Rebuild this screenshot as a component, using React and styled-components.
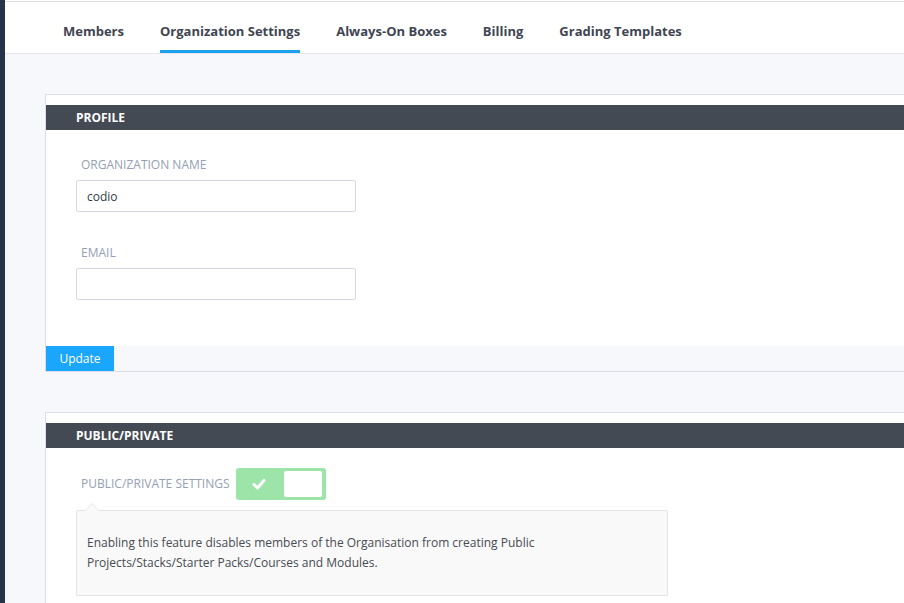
import React from 'react'
import styled, { createGlobalStyle } from 'styled-components'

const GlobalStyle = createGlobalStyle`
  html, body {
    margin: 0;
    padding: 0;
    overflow: hidden;
  }
  body {
    font-family: "Open Sans", "Liberation Sans", sans-serif;
    background: #f7f8fb;
  }
  * { box-sizing: border-box; }
`

const tabs = ['Members', 'Organization Settings', 'Always-On Boxes', 'Billing', 'Grading Templates']

function App() {
  return (
    <>
      <GlobalStyle />
      <Page>
        <Sidebar />
        <Main>
          <TabBar>
            {tabs.map((t) => (
              <Tab key={t} active={t === 'Organization Settings'}>{t}</Tab>
            ))}
          </TabBar>
          <Content>
            <Card>
              <CardHeader>Profile</CardHeader>
              <CardBody>
                <Label>Organization Name</Label>
                <Input defaultValue="codio" />
                <Label spaced>Email</Label>
                <Input defaultValue="" />
              </CardBody>
              <CardFooter>
                <Button>Update</Button>
              </CardFooter>
            </Card>

            <Card>
              <CardHeader>Public/Private</CardHeader>
              <ToggleRow>
                <Label inline>Public/Private Settings</Label>
                <Toggle>
                  <CheckHalf>
                    <svg width="14" height="12" viewBox="0 0 14 12">
                      <polyline points="2,6.5 5.5,10 12,2.5" fill="none" stroke="#fff" strokeWidth="3" strokeLinecap="round" strokeLinejoin="round" />
                    </svg>
                  </CheckHalf>
                  <Knob />
                </Toggle>
              </ToggleRow>
              <Hint>
                <HintText>
                  Enabling this feature disables members of the Organisation from creating Public Projects/Stacks/Starter Packs/Courses and Modules.
                </HintText>
              </Hint>
            </Card>
          </Content>
        </Main>
      </Page>
    </>
  )
}

export default App

const Page = styled.div`
  display: flex;
  min-height: 100vh;
`

const Sidebar = styled.div`
  width: 5px;
  flex-shrink: 0;
  background: #263349;
`

const Main = styled.div`
  flex: 1;
  background: #f7f8fb;
  padding-top: 1px;
  background-image: linear-gradient(#fff, #fff);
  background-size: 100% 1px;
  background-repeat: no-repeat;
`

const TabBar = styled.nav`
  display: flex;
  gap: 36px;
  padding-left: 58px;
  background: #fff;
  border-top: 1px solid #dddde6;
  border-bottom: 1px solid #e6e7ee;
  height: 53px;
`

const Tab = styled.div`
  padding-top: 20px;
  height: 51px;
  font-size: 13px;
  line-height: 18px;
  font-weight: 700;
  color: #3f4552;
  border-bottom: 3px solid ${(p) => (p.active ? '#1ba1ef' : 'transparent')};
  white-space: nowrap;
`

const Content = styled.div`
  padding: 40px 0 0 40px;
  display: flex;
  flex-direction: column;
  gap: 40px;
`

const Card = styled.section`
  background: #fff;
  border: 1px solid #dcdde8;
  border-right: none;
  padding-top: 10px;
`

const CardHeader = styled.h2`
  margin: 0;
  height: 25px;
  line-height: 25px;
  padding-left: 30px;
  background: #434a54;
  color: #fff;
  font-size: 12px;
  font-weight: 700;
  text-transform: uppercase;
`

const CardBody = styled.div`
  padding: 27px 30px 46px;
`

const Label = styled.label`
  display: block;
  padding-left: 5px;
  margin-top: ${(p) => (p.spaced ? '33px' : '0')};
  margin-bottom: ${(p) => (p.inline ? '0' : '7px')};
  font-size: 12px;
  line-height: 16px;
  color: #95a0b4;
  text-transform: uppercase;
`

const Input = styled.input`
  display: block;
  width: 280px;
  height: 32px;
  padding: 0 10px;
  border: 1px solid #d6d7e4;
  border-radius: 2px;
  font-family: inherit;
  font-size: 12px;
  color: #333a45;
  outline: none;
`

const CardFooter = styled.div`
  background: #f7f8fb;
  height: 25px;
  display: flex;
`

const Button = styled.button`
  width: 68px;
  height: 25px;
  border: none;
  background: #19a6fc;
  color: #fff;
  font-family: inherit;
  font-size: 12px;
  padding: 0;
  cursor: pointer;
`

const ToggleRow = styled.div`
  display: flex;
  align-items: center;
  gap: 6px;
  padding: 20px 30px 0;
`

const Toggle = styled.div`
  width: 90px;
  height: 32px;
  border-radius: 3px;
  background: #9ce4a8;
  display: flex;
  align-items: center;
  padding: 3px 4px 3px 0;
`

const CheckHalf = styled.div`
  width: 46px;
  display: flex;
  justify-content: center;
  align-items: center;
`

const Knob = styled.div`
  width: 38px;
  height: 26px;
  margin-left: 2px;
  border-radius: 2px;
  background: #fff;
`

const Hint = styled.div`
  position: relative;
  margin: 10px 0 20px 30px;
  width: 592px;
  background: #f9f9f9;
  border: 1px solid #e4e5eb;
  border-radius: 2px;
  padding: 22px 10px;

  &::before,
  &::after {
    content: '';
    position: absolute;
    left: 7px;
    top: -8px;
    border-left: 8px solid transparent;
    border-right: 8px solid transparent;
    border-bottom: 8px solid #e4e5eb;
  }
  &::after {
    top: -7px;
    border-bottom-color: #f9f9f9;
  }
`

const HintText = styled.p`
  margin: 0;
  max-width: 462px;
  font-size: 12px;
  line-height: 20px;
  color: #474b52;
`
